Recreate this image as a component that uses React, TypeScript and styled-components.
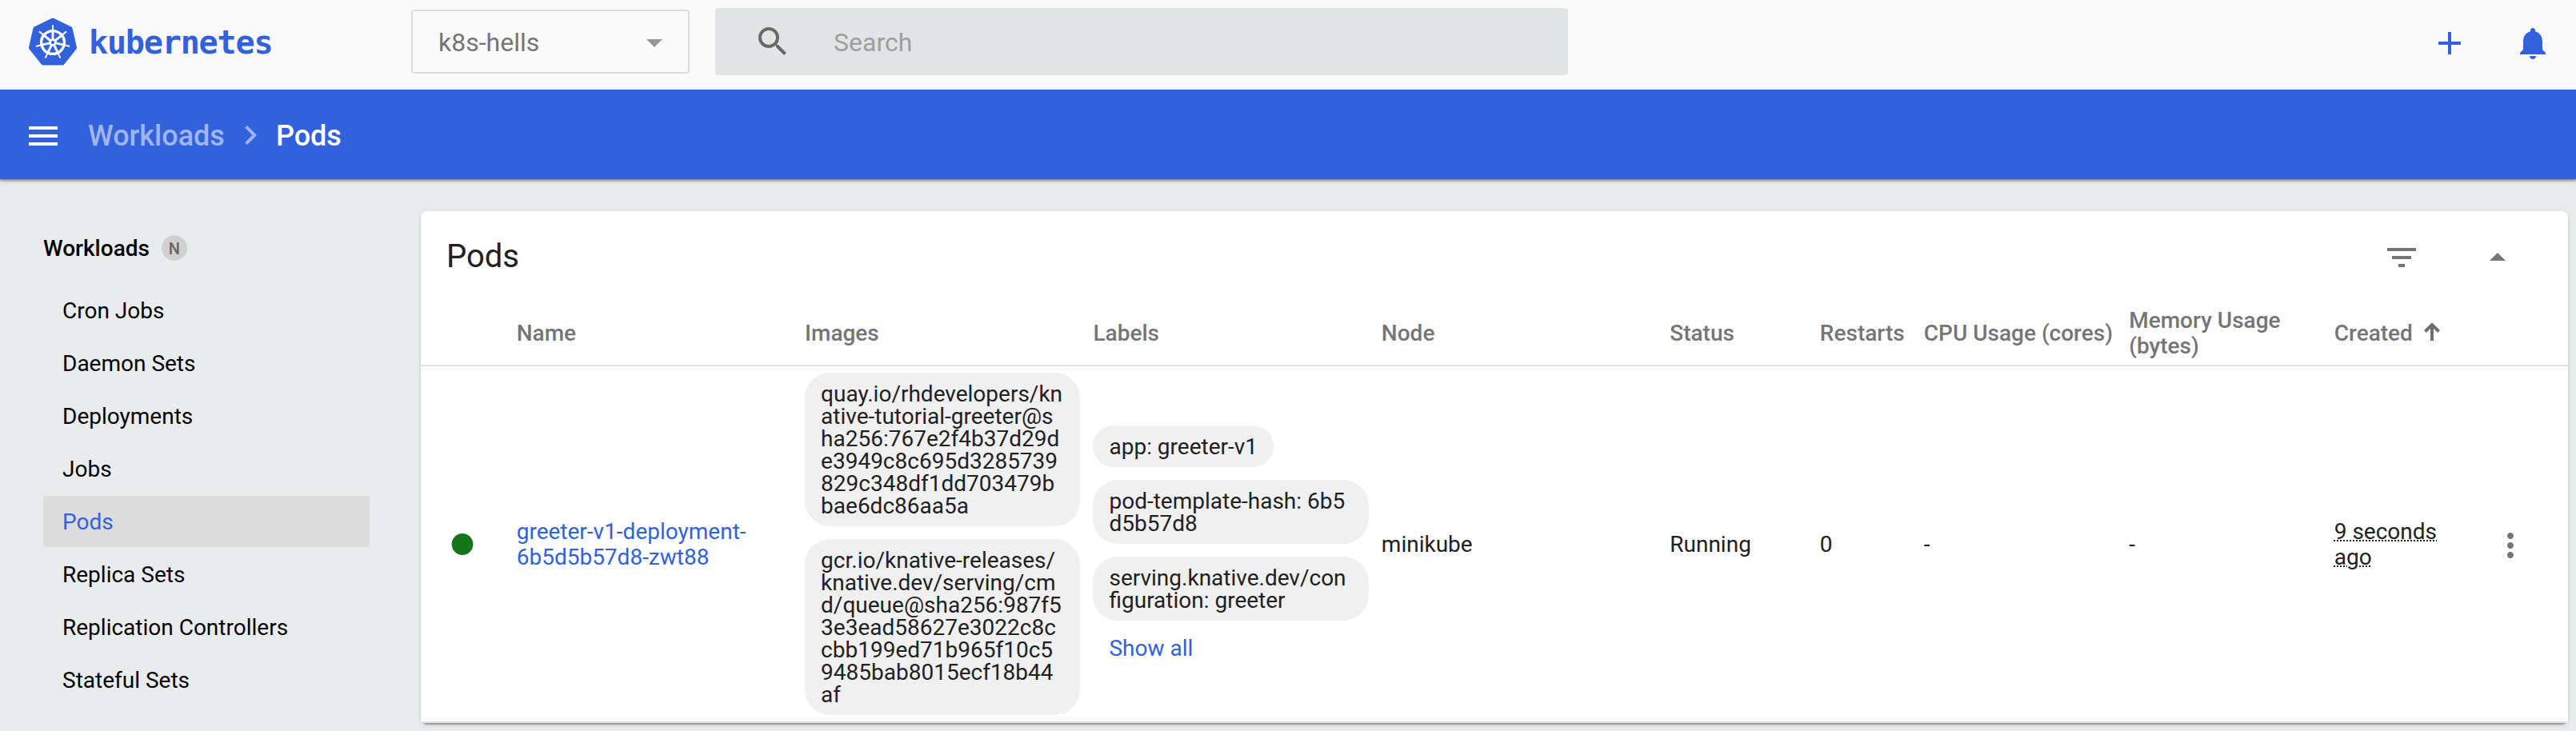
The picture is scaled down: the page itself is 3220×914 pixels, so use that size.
import React from "react";
import styled, { createGlobalStyle } from "styled-components";

const BLUE = "#3261dc";
const GREY = "#757575";
const TEXT = "#212121";

const GlobalStyle = createGlobalStyle`
  *, *::before, *::after { box-sizing: border-box; }
  body {
    margin: 0;
    background: #e8eced;
    color: ${TEXT};
    font-family: Roboto, "Liberation Sans", sans-serif;
    font-size: 28px;
    line-height: 32px;
  }
`;

const Page = styled.div`
  display: flex;
  flex-direction: column;
  height: 914px;
  overflow: hidden;
`;

const TopBar = styled.header`
  display: flex;
  align-items: flex-start;
  height: 112px;
  background: #fafafa;
`;

const Brand = styled.a`
  display: flex;
  align-items: center;
  width: 514px;
  height: 104px;
  padding-left: 34px;
`;

const BrandName = styled.span`
  margin-left: 13px;
  padding-top: 2px;
  color: ${BLUE};
  font-family: "DejaVu Sans Mono", monospace;
  font-weight: 700;
  font-size: 40px;
  line-height: 48px;
  letter-spacing: -1.15px;
`;

const NamespaceSelect = styled.div`
  display: flex;
  align-items: center;
  justify-content: space-between;
  width: 348px;
  height: 80px;
  margin-top: 12px;
  padding: 2px 32px 0 32px;
  border: 2px solid #dcdcdc;
  border-radius: 4px;
  color: ${GREY};
  font-size: 32px;

  svg {
    margin-top: 2px;
  }
`;

const SearchBox = styled.div`
  display: flex;
  align-items: center;
  width: 1066px;
  height: 84px;
  margin: 10px 0 0 32px;
  padding: 0 48px;
  border-radius: 4px;
  background: #e1e5e5;
  color: #9e9e9e;
  font-size: 32px;
`;

const SearchLabel = styled.span`
  margin: 2px 0 0 52px;
`;

const TopActions = styled.div`
  display: flex;
  gap: 56px;
  margin: 30px 30px 0 auto;
`;

const Toolbar = styled.nav`
  position: relative;
  display: flex;
  align-items: center;
  flex: none;
  height: 112px;
  padding: 4px 0 0 30px;
  background: ${BLUE};
  box-shadow: 0 2px 2px rgba(0, 0, 0, 0.3), 0 2px 6px rgba(0, 0, 0, 0.2);
  font-weight: 500;
  font-size: 36px;
  line-height: 42px;
`;

const Crumb = styled.span<{ $current?: boolean; $gap: number }>`
  margin-left: ${(p) => p.$gap}px;
  color: ${(p) => (p.$current ? "#fff" : "#a0b4ee")};
`;

const CrumbIcon = styled.span`
  display: flex;
  width: 48px;
  margin: -2px 0 0 8px;
`;

const Body = styled.div`
  display: flex;
  flex: 1;
  align-items: flex-start;
`;

const Sidebar = styled.aside`
  width: 526px;
  padding: 66px 64px 0 54px;
  color: #000;
`;

const SideHeading = styled.div`
  display: flex;
  align-items: center;
  height: 40px;
  margin-bottom: 26px;
  padding-top: 2px;
  font-weight: 500;
`;

const Badge = styled.span`
  display: flex;
  align-items: center;
  justify-content: center;
  width: 32px;
  height: 32px;
  margin: -2px 0 0 15px;
  padding-top: 2px;
  border-radius: 50%;
  background: #d0d0d1;
  color: #666;
  font-size: 20px;
`;

const SideItem = styled.a<{ $active?: boolean }>`
  display: flex;
  align-items: center;
  height: 64px;
  margin-bottom: 2px;
  padding: 2px 0 0 24px;
  border-radius: 4px;
  background: ${(p) => (p.$active ? "#dcdcdc" : "transparent")};
  color: ${(p) => (p.$active ? BLUE : "#000")};
`;

const Card = styled.main`
  width: 2684px;
  height: 640px;
  margin-top: 40px;
  border-radius: 8px;
  background: #fff;
  box-shadow: 0 4px 2px -2px rgba(0, 0, 0, 0.2), 0 2px 2px 0 rgba(0, 0, 0, 0.14),
    0 2px 6px 0 rgba(0, 0, 0, 0.12);
`;

const CardHeader = styled.div`
  display: flex;
  align-items: center;
  height: 112px;
  padding: 0 64px 0 32px;
`;

const CardTitle = styled.h1`
  margin: 2px auto 0 0;
  font-weight: 400;
  font-size: 40px;
  line-height: 48px;
`;

const CardActions = styled.div`
  display: flex;
  gap: 72px;
  margin-top: 4px;
`;

const Row = styled.div<{ $head?: boolean }>`
  display: grid;
  grid-template-columns: 119.7px repeat(4, 360.4px) 187.6px 130px 256.4px 256.5px 196px 1fr;
  align-items: center;
  height: ${(p) => (p.$head ? 82 : 446)}px;
  border-bottom: 2px solid #e0e0e0;
  background: #fff;
  color: ${(p) => (p.$head ? GREY : TEXT)};
  font-weight: ${(p) => (p.$head ? 500 : 400)};
`;

const Cell = styled.div<{ $wide?: boolean }>`
  padding-top: 2px;
  padding-right: ${(p) => (p.$wide ? 0 : 16)}px;
`;

const CreatedHead = styled.div`
  display: flex;
  align-items: center;
  gap: 14px;
  padding-top: 2px;

  svg {
    margin-bottom: 4px;
  }
`;

const StatusCell = styled.div`
  display: flex;
  padding-left: 36px;
`;

const MenuCell = styled.div`
  display: flex;
  margin-top: 4px;
`;

const Link = styled.a`
  color: ${BLUE};
`;

const ChipList = styled.div`
  display: flex;
  flex-direction: column;
  align-items: flex-start;
  gap: 16px;
  padding-right: 16px;
`;

const Chip = styled.div<{ $fit?: boolean }>`
  width: ${(p) => (p.$fit ? "auto" : "100%")};
  padding: 13px 20px 11px;
  border-radius: 32px;
  background: #f0f0f0;
  line-height: 28px;
  white-space: pre;
`;

const ShowAll = styled.a`
  display: flex;
  align-items: center;
  height: 52px;
  margin: -8px 0 -8px 20px;
  padding-top: 2px;
  color: ${BLUE};
`;

const Age = styled.span`
  text-decoration: underline dotted 2px;
`;

const AgeCell = styled.div`
  width: 150px;
  padding-top: 2px;
`;

const MaterialIcon = ({ d, color }: { d: string; color: string }) => (
  <svg width="48" height="48" viewBox="0 0 24 24" fill={color}>
    <path d={d} />
  </svg>
);

const polar = (r: number, k: number) => {
  const a = (-90 + (k * 360) / 7) * (Math.PI / 180);
  return [32 + r * Math.cos(a), r * Math.sin(a)];
};

const Logo = () => {
  const hull = [0, 1, 2, 3, 4, 5, 6]
    .map((k) => {
      const [x, y] = polar(28.3, k);
      return `${x.toFixed(2)},${(y + 33.4).toFixed(2)}`;
    })
    .join(" ");
  return (
    <svg width="64" height="64" viewBox="0 0 64 64">
      <polygon points={hull} fill="#fff" stroke="#fff" strokeWidth="8.5" strokeLinejoin="round" />
      <polygon points={hull} fill={BLUE} stroke={BLUE} strokeWidth="5" strokeLinejoin="round" />
      <circle cx="32" cy="33" r="14.4" fill="none" stroke="#fff" strokeWidth="3.4" />
      {[0, 1, 2, 3, 4, 5, 6].map((k) => {
        const [x1, y1] = polar(4, k);
        const [x2, y2] = polar(14, k);
        const [x3, y3] = polar(21, k);
        return (
          <g key={k} stroke="#fff" strokeLinecap="round">
            <line x1={x1} y1={y1 + 33} x2={x2} y2={y2 + 33} strokeWidth="2.9" />
            <line x1={x2} y1={y2 + 33} x2={x3} y2={y3 + 33} strokeWidth="2" />
          </g>
        );
      })}
      <circle cx="32" cy="33" r="4.8" fill="#fff" />
      <circle cx="32" cy="33" r="2.1" fill={BLUE} />
    </svg>
  );
};

const sideItems = [
  "Cron Jobs",
  "Daemon Sets",
  "Deployments",
  "Jobs",
  "Pods",
  "Replica Sets",
  "Replication Controllers",
  "Stateful Sets",
];

const images = [
  "quay.io/rhdevelopers/kn\native-tutorial-greeter@s\nha256:767e2f4b37d29d\ne3949c8c695d3285739\n829c348df1dd703479b\nbae6dc86aa5a",
  "gcr.io/knative-releases/\nknative.dev/serving/cm\nd/queue@sha256:987f5\n3e3ead58627e3022c8c\ncbb199ed71b965f10c5\n9485bab8015ecf18b44\naf",
];

export default function App() {
  return (
    <Page>
      <GlobalStyle />
      <TopBar>
        <Brand>
          <Logo />
          <BrandName>kubernetes</BrandName>
        </Brand>
        <NamespaceSelect>
          k8s-hells
          <svg width="20" height="10" viewBox="0 0 20 10" fill="#979797">
            <path d="M0 0h20L10 10z" />
          </svg>
        </NamespaceSelect>
        <SearchBox>
          <MaterialIcon
            color="#676969"
            d="M15.5 14h-.79l-.28-.27A6.471 6.471 0 0 0 16 9.5 6.5 6.5 0 1 0 9.5 16c1.61 0 3.09-.59 4.23-1.57l.27.28v.79l5 4.99L20.49 19l-4.99-5zm-6 0C7.01 14 5 11.99 5 9.5S7.01 5 9.5 5 14 7.01 14 9.5 11.99 14 9.5 14z"
          />
          <SearchLabel>Search</SearchLabel>
        </SearchBox>
        <TopActions>
          <MaterialIcon color={BLUE} d="M19 13h-6v6h-2v-6H5v-2h6V5h2v6h6v2z" />
          <MaterialIcon
            color={BLUE}
            d="M12 22c1.1 0 2-.9 2-2h-4c0 1.1.89 2 2 2zm6-6v-5c0-3.07-1.64-5.64-4.5-6.32V4c0-.83-.67-1.5-1.5-1.5s-1.5.67-1.5 1.5v.68C7.63 5.36 6 7.92 6 11v5l-2 2v1h16v-1l-2-2z"
          />
        </TopActions>
      </TopBar>
      <Toolbar>
        <MaterialIcon color="#fff" d="M3 18h18v-2H3v2zm0-5h18v-2H3v2zm0-7v2h18V6H3z" />
        <Crumb $gap={32}>Workloads</Crumb>
        <CrumbIcon>
          <MaterialIcon color="#a0b4ee" d="M10 6L8.59 7.41 13.17 12l-4.58 4.59L10 18l6-6z" />
        </CrumbIcon>
        <Crumb $current $gap={8}>
          Pods
        </Crumb>
      </Toolbar>
      <Body>
        <Sidebar>
          <SideHeading>
            Workloads<Badge>N</Badge>
          </SideHeading>
          {sideItems.map((name) => (
            <SideItem key={name} $active={name === "Pods"}>
              {name}
            </SideItem>
          ))}
        </Sidebar>
        <Card>
          <CardHeader>
            <CardTitle>Pods</CardTitle>
            <CardActions>
              <MaterialIcon color={GREY} d="M10 18h4v-2h-4v2zM3 6v2h18V6H3zm3 7h12v-2H6v2z" />
              <MaterialIcon color={GREY} d="M7 14l5-5 5 5z" />
            </CardActions>
          </CardHeader>
          <Row $head>
            <div />
            <Cell>Name</Cell>
            <Cell>Images</Cell>
            <Cell>Labels</Cell>
            <Cell>Node</Cell>
            <Cell>Status</Cell>
            <Cell>Restarts</Cell>
            <Cell $wide>CPU Usage (cores)</Cell>
            <Cell>Memory Usage (bytes)</Cell>
            <CreatedHead>
              Created
              <svg width="20" height="24" viewBox="0 0 20 24" fill="none" stroke="#6f6f6f" strokeWidth="4">
                <path d="M10 23V3M1.5 11.5L10 3l8.5 8.5" />
              </svg>
            </CreatedHead>
          </Row>
          <Row>
            <StatusCell>
              <svg width="32" height="32" viewBox="0 0 32 32">
                <circle cx="16" cy="16.5" r="13.4" fill="#157518" />
              </svg>
            </StatusCell>
            <Cell>
              <Link>
                greeter-v1-deployment-
                <br />
                6b5d5b57d8-zwt88
              </Link>
            </Cell>
            <ChipList>
              {images.map((text) => (
                <Chip key={text}>{text}</Chip>
              ))}
            </ChipList>
            <ChipList>
              <Chip $fit>app: greeter-v1</Chip>
              <Chip>{"pod-template-hash: 6b5\nd5b57d8"}</Chip>
              <Chip>{"serving.knative.dev/con\nfiguration: greeter"}</Chip>
              <ShowAll>Show all</ShowAll>
            </ChipList>
            <Cell>minikube</Cell>
            <Cell>Running</Cell>
            <Cell>0</Cell>
            <Cell>-</Cell>
            <Cell>-</Cell>
            <AgeCell>
              <Age>9 seconds ago</Age>
            </AgeCell>
            <MenuCell>
              <MaterialIcon
                color={GREY}
                d="M12 8c1.1 0 2-.9 2-2s-.9-2-2-2-2 .9-2 2 .9 2 2 2zm0 2c-1.1 0-2 .9-2 2s.9 2 2 2 2-.9 2-2-.9-2-2-2zm0 6c-1.1 0-2 .9-2 2s.9 2 2 2 2-.9 2-2-.9-2-2-2z"
              />
            </MenuCell>
          </Row>
        </Card>
      </Body>
    </Page>
  );
}
